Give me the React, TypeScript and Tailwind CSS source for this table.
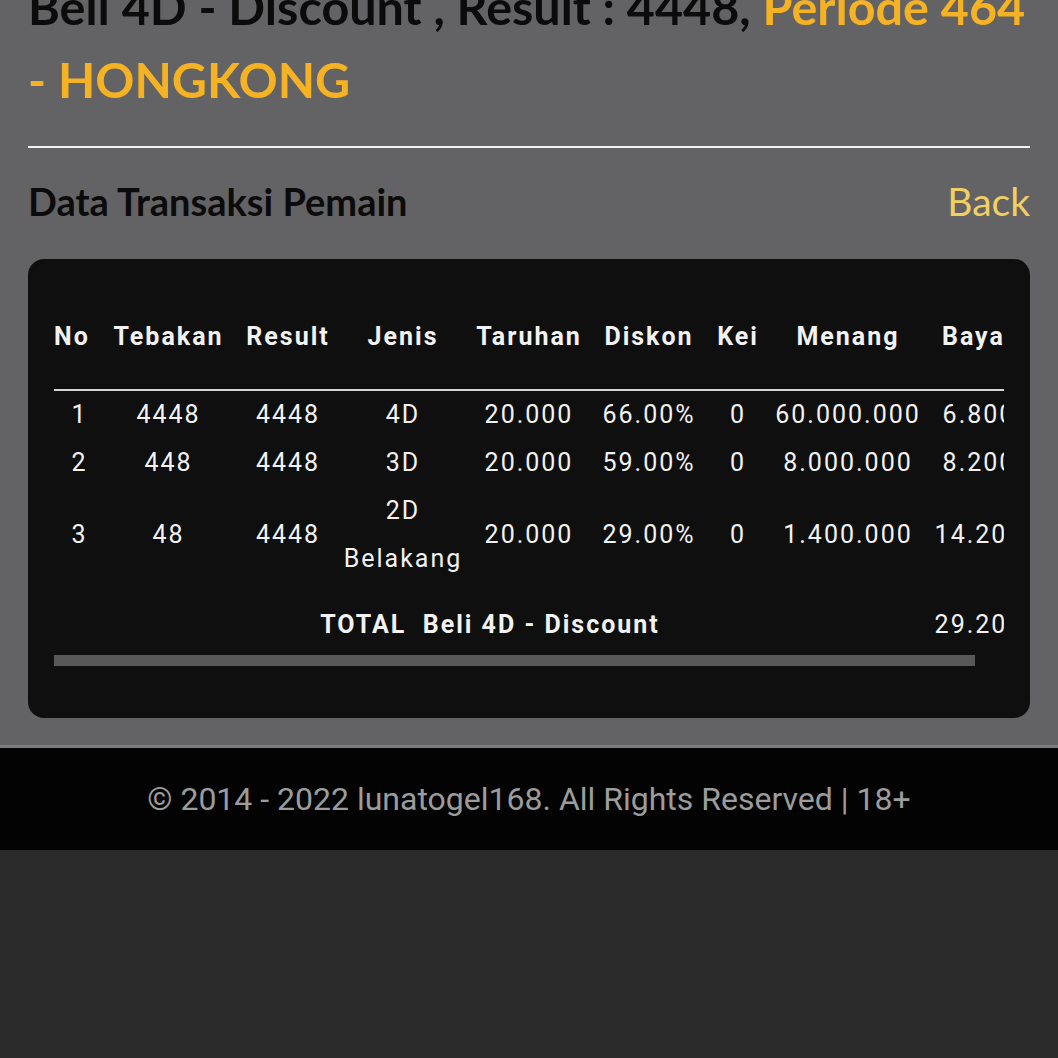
import React from 'react'

type Row = {
  no: number
  tebakan: string
  result: string
  jenis: string
  taruhan: string
  diskon: string
  kei: string
  menang: string
  bayar: string
}

const rows: Row[] = [
  { no: 1, tebakan: '4448', result: '4448', jenis: '4D', taruhan: '20.000', diskon: '66.00%', kei: '0', menang: '60.000.000', bayar: '6.800' },
  { no: 2, tebakan: '448', result: '4448', jenis: '3D', taruhan: '20.000', diskon: '59.00%', kei: '0', menang: '8.000.000', bayar: '8.200' },
  { no: 3, tebakan: '48', result: '4448', jenis: '2D Belakang', taruhan: '20.000', diskon: '29.00%', kei: '0', menang: '1.400.000', bayar: '14.200' },
]

const headers = ['Tebakan', 'Result', 'Jenis', 'Taruhan', 'Diskon', 'Kei', 'Menang', 'Bayar']
const colWidths = [47, 135, 104, 126, 126, 114, 64, 156, 106]

export default function App() {
  return (
    <div className="min-h-[1058px] w-full bg-[#2a2a2a] overflow-hidden">
      <section className="bg-[#636365] px-[28px] pb-[27px]">
        <h1
          className="mt-[-30px] text-[48.5px] leading-[73px] font-bold text-[#0b0b0b] whitespace-nowrap"
          style={{ fontFamily: 'Lato, "Noto Sans", sans-serif' }}
        >
          Beli 4D - Discount , Result : 4448,{' '}
          <span className="text-[#f4b224]">
            Periode 464
            <br />- HONGKONG
          </span>
        </h1>

        <div className="mt-[30px] h-[2px] bg-[#f2f2f2]" />

        <div
          className="mt-[29px] flex items-center justify-between h-[48px]"
          style={{ fontFamily: 'Lato, "Noto Sans", sans-serif' }}
        >
          <h2 className="text-[38px] font-bold text-[#0b0b0b]">Data Transaksi Pemain</h2>
          <a className="text-[39px] text-[#f1cf63]">Back</a>
        </div>

        <div className="mt-[34px] rounded-[16px] bg-[#0f0f0f] px-[26px] pt-[24px] pb-[52px]">
          <div
            className="overflow-hidden text-[#f2f2f2] text-[25px] tracking-[2px]"
            style={{ fontFamily: 'Roboto, "Noto Sans", sans-serif' }}
          >
            <table className="table-fixed border-collapse w-[978px]">
              <colgroup>
                {colWidths.map((w, i) => (
                  <col key={i} style={{ width: w }} />
                ))}
              </colgroup>
              <thead>
                <tr className="border-b-2 border-[#d4d4d4]">
                  <th className="pt-[30px] pb-[28px] leading-[48px] font-bold text-left">No</th>
                  {headers.map((h) => (
                    <th key={h} className="pt-[30px] pb-[28px] leading-[48px] font-bold text-center">
                      {h}
                    </th>
                  ))}
                </tr>
              </thead>
              <tbody>
                {rows.map((r) => (
                  <tr key={r.no} className="leading-[48px] text-center">
                    <td className="pl-[4px]">{r.no}</td>
                    <td>{r.tebakan}</td>
                    <td>{r.result}</td>
                    <td className="px-[2px]">{r.jenis}</td>
                    <td>{r.taruhan}</td>
                    <td>{r.diskon}</td>
                    <td>{r.kei}</td>
                    <td>{r.menang}</td>
                    <td className="whitespace-nowrap">{r.bayar}</td>
                  </tr>
                ))}
                <tr className="leading-[48px]">
                  <td colSpan={8} className="pt-[18px] pb-[6px] text-center font-bold">
                    TOTAL&nbsp; Beli 4D - Discount
                  </td>
                  <td className="pt-[18px] pb-[6px] text-center whitespace-nowrap">29.200</td>
                </tr>
              </tbody>
            </table>
            <div className="h-[11px] w-[921px] bg-[#585858]" />
          </div>
        </div>
      </section>

      <footer className="border-t-[3px] border-[#7d7d7f] bg-[#030303] h-[105px] flex items-center justify-center">
        <p
          className="text-[32px] text-[#9c9c9c]"
          style={{ fontFamily: 'Roboto, "Noto Sans", sans-serif' }}
        >
          © 2014 - 2022 lunatogel168. All Rights Reserved | 18+
        </p>
      </footer>
    </div>
  )
}
